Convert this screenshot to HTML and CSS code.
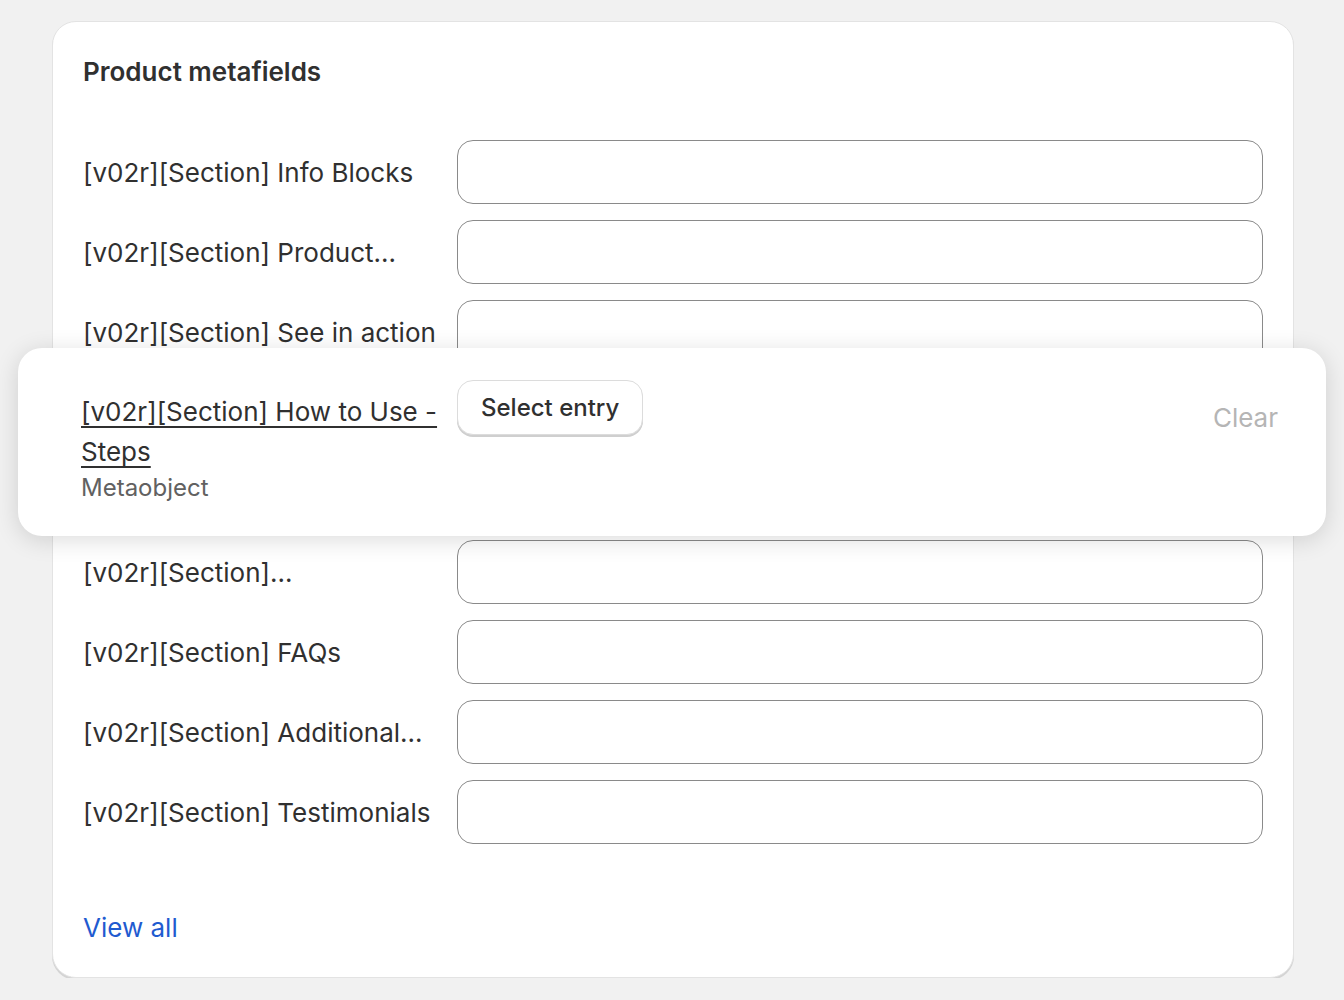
FILE: index.html
```html
<!DOCTYPE html>
<html lang="en">
<head>
  <meta charset="UTF-8">
  <meta name="viewport" content="width=device-width, initial-scale=1.0">
  <title>Product metafields</title>
  <link rel="stylesheet" href="styles.css">
</head>
<body>
  <div class="card">
    <h2 class="card-title">Product metafields</h2>

    <div class="fields">
      <div class="field">
        <label class="field-label">[v02r][Section] Info Blocks</label>
        <div class="field-input"></div>
      </div>
      <div class="field">
        <label class="field-label">[v02r][Section] Product...</label>
        <div class="field-input"></div>
      </div>
      <div class="field">
        <label class="field-label">[v02r][Section] See in action</label>
        <div class="field-input"></div>
      </div>
      <!-- these two rows sit under the popover -->
      <div class="field field-covered">
        <label class="field-label">[v02r][Section] How to Use - Steps</label>
        <div class="field-input"></div>
      </div>
      <div class="field field-covered">
        <label class="field-label">[v02r][Section] Ingredients</label>
        <div class="field-input"></div>
      </div>
      <div class="field">
        <label class="field-label">[v02r][Section]...</label>
        <div class="field-input"></div>
      </div>
      <div class="field">
        <label class="field-label">[v02r][Section] FAQs</label>
        <div class="field-input"></div>
      </div>
      <div class="field">
        <label class="field-label">[v02r][Section] Additional...</label>
        <div class="field-input"></div>
      </div>
      <div class="field">
        <label class="field-label">[v02r][Section] Testimonials</label>
        <div class="field-input"></div>
      </div>
    </div>

    <a class="view-all" href="#">View all</a>

    <!-- row being edited, floats above the list -->
    <div class="popover">
      <div class="popover-label">
        <a href="#" class="popover-name">[v02r][Section] How to Use - Steps</a>
        <div class="popover-type">Metaobject</div>
      </div>
      <button class="select-btn">Select entry</button>
      <span class="clear">Clear</span>
    </div>
  </div>
</body>
</html>
```

FILE: styles.css
```css
body { margin: 0; background: #f1f1f1; font-family: Inter, "Noto Sans", sans-serif; color: #303030; }

.card { position: relative; margin: 21px 50px 0 52px; background: #fff; border: 1px solid #e3e3e3; border-radius: 24px; box-shadow: 0 2px 0 #d4d4d4; padding: 0 30px; height: 957px; box-sizing: border-box; }
.card-title { margin: 0; padding-top: 32px; font-size: 26px; font-weight: 600; line-height: 36px; }

.fields { margin-top: 50px; display: flex; flex-direction: column; gap: 16px; }
.field { display: flex; align-items: center; gap: 20px; }
.field-label { width: 354px; flex-shrink: 0; font-size: 26px; white-space: nowrap; overflow: hidden; }
.field-input { flex: 1; height: 62px; border: 1px solid #8a8a8a; border-radius: 16px; }
.field-covered .field-label { visibility: hidden; }

.view-all { display: inline-block; margin-top: 68px; font-size: 26px; color: #1f5bd0; text-decoration: none; }

.popover { position: absolute; left: -35px; right: -33px; top: 326px; height: 188px; background: #fff; border-radius: 24px; box-shadow: 0 4px 24px rgba(0,0,0,0.14); display: flex; align-items: flex-start; padding: 32px 48px 0 63px; box-sizing: border-box; }
.popover-label { width: 376px; flex-shrink: 0; font-size: 26px; line-height: 40px; margin-top: 12px; }
.popover-name { color: #303030; text-decoration: underline; text-underline-offset: 5px; text-decoration-thickness: 2px; }
.popover-type { color: #616161; font-size: 24px; line-height: 32px; }
.select-btn { font-family: inherit; font-size: 24px; font-weight: 500; color: #303030; background: #fff; border: 1px solid #dcdcdc; border-radius: 16px; box-shadow: 0 2px 0 #cfcfcf; padding: 0 23px; height: 55px; cursor: pointer; }
.clear { margin-left: auto; margin-top: 22px; font-size: 26px; color: #b5b5b5; }
```
